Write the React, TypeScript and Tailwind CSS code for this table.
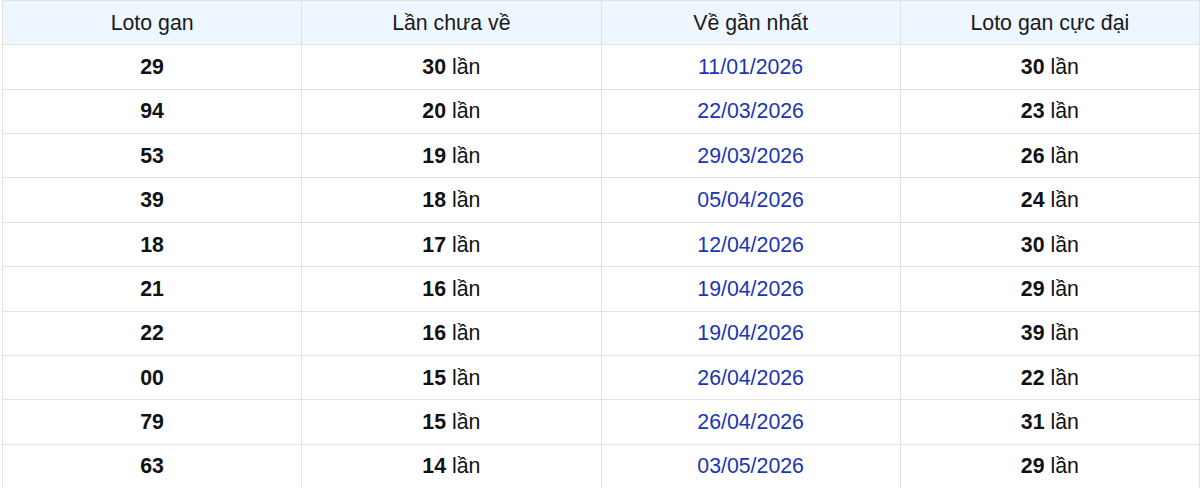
import React from "react";

const rows: [string, string, string, string][] = [
  ["29", "30", "11/01/2026", "30"],
  ["94", "20", "22/03/2026", "23"],
  ["53", "19", "29/03/2026", "26"],
  ["39", "18", "05/04/2026", "24"],
  ["18", "17", "12/04/2026", "30"],
  ["21", "16", "19/04/2026", "29"],
  ["22", "16", "19/04/2026", "39"],
  ["00", "15", "26/04/2026", "22"],
  ["79", "15", "26/04/2026", "31"],
  ["63", "14", "03/05/2026", "29"],
];

export default function App() {
  return (
    <div className="w-[1200px] h-[488px] overflow-hidden bg-white pl-[2px]" style={{ fontFamily: '"Liberation Sans", Arial, sans-serif' }}>
      <table className="w-[1198px] border-collapse table-fixed text-[21.3px] text-[#111]">
        <thead>
          <tr className="h-[44.36px] bg-[#eef6ff]">
            {["Loto gan", "Lần chưa về", "Về gần nhất", "Loto gan cực đại"].map((h) => (
              <th key={h} className="border border-[#e2e2e2] font-normal text-center p-0 pt-[2px] text-[#1a1a1a]">
                {h}
              </th>
            ))}
          </tr>
        </thead>
        <tbody>
          {rows.map((r, i) => (
            <tr key={i} className="h-[44.36px]">
              <td className="border border-[#e2e2e2] text-center font-bold p-0 pt-[2px]">{r[0]}</td>
              <td className="border border-[#e2e2e2] text-center p-0 pt-[2px]">
                <b>{r[1]}</b> lần
              </td>
              <td className="border border-[#e2e2e2] text-center p-0 pt-[2px] text-[#1a36b4]">{r[2]}</td>
              <td className="border border-[#e2e2e2] text-center p-0 pt-[2px]">
                <b>{r[3]}</b> lần
              </td>
            </tr>
          ))}
        </tbody>
      </table>
    </div>
  );
}
